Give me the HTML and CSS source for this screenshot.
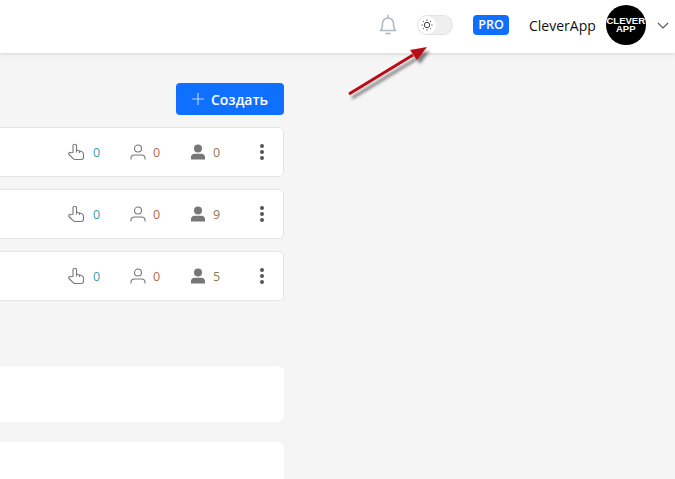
FILE: index.html
```html
<!DOCTYPE html>
<html lang="ru">
<head>
<meta charset="utf-8">
<title>CleverApp</title>
<link rel="stylesheet" href="styles.css">
</head>
<body>
<header class="topbar">
  <svg class="bell" width="20" height="22" viewBox="0 0 20 22" fill="none" stroke="#aebbc1" stroke-width="1.600"><path d="M2.500 16.500c1.300-1.400 2-2.600 2-5.500V9.500c0-3 2.300-5.500 5.500-5.500s5.500 2.500 5.500 5.500V11c0 2.900.7 4.100 2 5.500z" stroke-linejoin="round"/><path d="M10 1.500V4M8 19.500h4" stroke-linecap="round"/></svg>
  <div class="toggle">
    <span class="knob">
      <svg width="12" height="12" viewBox="0 0 12 12" fill="none" stroke="#444" stroke-width="1"><circle cx="6" cy="6" r="2.700"/><path d="M6 .5v1.200M6 10.300v1.200M.5 6h1.200M10.300 6h1.200M2.100 2.100l.9.9M9 9l.9.9M2.100 9.900l.9-.9M9 3l.9-.9"/></svg>
    </span>
  </div>
  <span class="pro">PRO</span>
  <span class="username">CleverApp</span>
  <span class="avatar"><span>CLEVER</span><span>APP</span></span>
  <svg class="chevron" width="12" height="7" viewBox="0 0 12 7" fill="none" stroke="#555" stroke-width="1.100"><path d="M1 1l5 5 5-5"/></svg>
</header>

<main class="content">
  <div class="toolbar">
    <button class="create"><svg class="plus" width="12" height="12" viewBox="0 0 12 12" stroke="#b9d4ff" stroke-width="1.200"><path d="M6 0v12M0 6h12"/></svg>Создать</button>
  </div>

  <div class="list">
    <div class="row">
      <span class="stat stat-click"><svg class="ic" width="17" height="18" viewBox="0 0 17 18" fill="none" stroke="#777" stroke-width="1.100" stroke-linejoin="round"><path d="M5 9.500V2.500c0-1.600 3.500-1.600 3.500 0V7l5 1.500c1.500.5 2 1.200 2 2.500v3c0 1.500-.8 2.500-2 2.500H7c-.8 0-1.300-.3-1.800-.8L1 11.500C0 10.300 1.600 8.800 2.800 9.800zM8.500 7v2.500M11.500 8v2"/></svg><span class="num teal">0</span></span>
      <span class="stat stat-reach"><svg class="ic" width="16" height="16" viewBox="0 0 16 16" fill="none" stroke="#777" stroke-width="1.100"><circle cx="8" cy="4.500" r="3.500"/><path d="M1 15.500v-1.300c0-2 1.500-3.200 3.500-3.200h7c2 0 3.500 1.200 3.500 3.200v1.300"/></svg><span class="num rust">0</span></span>
      <span class="stat stat-sub"><svg class="ic" width="16" height="16" viewBox="0 0 16 16" fill="#777"><circle cx="8" cy="4.500" r="4"/><path d="M1 15.500v-2.500c0-2 1.500-3.300 3.500-3.300h7c2 0 3.500 1.300 3.500 3.300v2.500z"/></svg><span class="num olive">0</span></span>
      <span class="dots"><i></i><i></i><i></i></span>
    </div>
    <div class="row">
      <span class="stat stat-click"><svg class="ic" width="17" height="18" viewBox="0 0 17 18" fill="none" stroke="#777" stroke-width="1.100" stroke-linejoin="round"><path d="M5 9.500V2.500c0-1.600 3.500-1.600 3.500 0V7l5 1.500c1.500.5 2 1.200 2 2.500v3c0 1.500-.8 2.500-2 2.500H7c-.8 0-1.300-.3-1.800-.8L1 11.500C0 10.300 1.600 8.800 2.800 9.800zM8.500 7v2.500M11.500 8v2"/></svg><span class="num teal">0</span></span>
      <span class="stat stat-reach"><svg class="ic" width="16" height="16" viewBox="0 0 16 16" fill="none" stroke="#777" stroke-width="1.100"><circle cx="8" cy="4.500" r="3.500"/><path d="M1 15.500v-1.300c0-2 1.500-3.200 3.500-3.200h7c2 0 3.500 1.200 3.500 3.200v1.300"/></svg><span class="num rust">0</span></span>
      <span class="stat stat-sub"><svg class="ic" width="16" height="16" viewBox="0 0 16 16" fill="#777"><circle cx="8" cy="4.500" r="4"/><path d="M1 15.500v-2.500c0-2 1.500-3.300 3.500-3.300h7c2 0 3.500 1.300 3.500 3.300v2.500z"/></svg><span class="num olive">9</span></span>
      <span class="dots"><i></i><i></i><i></i></span>
    </div>
    <div class="row">
      <span class="stat stat-click"><svg class="ic" width="17" height="18" viewBox="0 0 17 18" fill="none" stroke="#777" stroke-width="1.100" stroke-linejoin="round"><path d="M5 9.500V2.500c0-1.600 3.500-1.600 3.500 0V7l5 1.500c1.500.5 2 1.200 2 2.500v3c0 1.500-.8 2.500-2 2.500H7c-.8 0-1.300-.3-1.800-.8L1 11.500C0 10.300 1.600 8.800 2.800 9.800zM8.500 7v2.500M11.500 8v2"/></svg><span class="num teal">0</span></span>
      <span class="stat stat-reach"><svg class="ic" width="16" height="16" viewBox="0 0 16 16" fill="none" stroke="#777" stroke-width="1.100"><circle cx="8" cy="4.500" r="3.500"/><path d="M1 15.500v-1.300c0-2 1.500-3.200 3.500-3.200h7c2 0 3.500 1.200 3.500 3.200v1.300"/></svg><span class="num rust">0</span></span>
      <span class="stat stat-sub"><svg class="ic" width="16" height="16" viewBox="0 0 16 16" fill="#777"><circle cx="8" cy="4.500" r="4"/><path d="M1 15.500v-2.500c0-2 1.500-3.300 3.500-3.300h7c2 0 3.500 1.300 3.500 3.300v2.500z"/></svg><span class="num olive">5</span></span>
      <span class="dots"><i></i><i></i><i></i></span>
    </div>
  </div>

  <div class="blank blank-first"></div>
  <div class="blank blank-second"></div>
</main>

<svg class="arrow" width="100" height="70" viewBox="0 0 100 70" fill="none">
  <defs><filter id="soft" x="-20%" y="-20%" width="140%" height="140%"><feGaussianBlur stdDeviation="1.500"/></filter></defs>
  <g filter="url(#soft)" opacity=".6" transform="translate(3 4)">
    <path d="M8 54L72 15" stroke="#333" stroke-width="3"/>
    <path d="M86 7L69 10L76 20z" fill="#333"/>
  </g>
  <path d="M8 54L72 15" stroke="#b80d14" stroke-width="3"/>
  <path d="M86 7L69 10L76 20z" fill="#b80d14"/>
</svg>
</body>
</html>
```

FILE: styles.css
```css
* { box-sizing: border-box; }

html, body {
  margin: 0;
  height: 100%;
  overflow: hidden;
}

body {
  position: relative;
  background: #f5f5f5;
  font-family: "Open Sans", "Noto Sans", sans-serif;
  color: #222;
}

.topbar {
  height: 53px;
  background: #fff;
  box-shadow: 0 1px 4px rgba(0, 0, 0, .14);
  display: flex;
  align-items: center;
  padding: 0 6px 3px 378px;
}

.bell { flex: none; }

.toggle {
  width: 36px;
  height: 20px;
  margin-left: 19px;
  border-radius: 10px;
  background: #efefef;
  border: 1px solid #e2e2e2;
  flex: none;
}

.knob {
  width: 18px;
  height: 18px;
  border-radius: 50%;
  background: #fff;
  display: flex;
  align-items: center;
  justify-content: center;
}

.pro {
  margin-left: 20px;
  width: 36px;
  height: 20px;
  border-radius: 4px;
  background: #0f6fff;
  color: #fff;
  font-size: 12.500px;
  font-weight: 600;
  line-height: 20px;
  text-align: center;
  flex: none;
}

.username {
  margin-left: 20px;
  font-size: 14px;
  color: #111;
  flex: none;
}

.avatar {
  margin-left: 10px;
  width: 40px;
  height: 40px;
  border-radius: 50%;
  background: #000;
  color: #fff;
  font-family: "Liberation Sans", sans-serif;
  font-size: 9.500px;
  font-weight: 700;
  line-height: 8px;
  display: flex;
  flex-direction: column;
  align-items: center;
  justify-content: center;
  flex: none;
}

.chevron {
  margin-left: 11px;
  flex: none;
}

.content {
  width: 284px;
  padding-top: 30px;
}

.toolbar {
  display: flex;
  justify-content: flex-end;
}

.create {
  width: 108px;
  height: 32px;
  border: 0;
  border-radius: 4px;
  background: #0f6fff;
  color: #fff;
  font-family: inherit;
  font-size: 14px;
  font-weight: 600;
  display: flex;
  align-items: center;
  justify-content: center;
  padding: 0;
}

.plus {
  margin-right: 7px;
  flex: none;
}

.list {
  margin-top: 12px;
  display: flex;
  flex-direction: column;
  gap: 12px;
}

.row {
  height: 50px;
  background: #fff;
  border: 1px solid #e4e4e4;
  border-left: 0;
  border-radius: 0 5px 5px 0;
  display: flex;
  align-items: center;
  justify-content: flex-end;
  padding-right: 19px;
}

.stat {
  display: flex;
  align-items: center;
  font-size: 12.500px;
}

.stat-click { width: 62px; }
.stat-reach { width: 60px; }
.stat-sub { width: 70px; }

.ic { flex: none; }
.stat-click .num { margin-left: 8px; }
.stat-reach .num { margin-left: 7px; }
.stat-sub .num { margin-left: 7px; }

.teal { color: #3f9ea6; }
.rust { color: #b4694f; }
.olive { color: #8a7a52; }

.dots {
  width: 4px;
  display: flex;
  flex-direction: column;
  gap: 2px;
}

.dots i {
  width: 4px;
  height: 4px;
  border-radius: 50%;
  background: #555;
}

.blank {
  background: #fff;
  border-radius: 0 6px 6px 0;
}

.blank-first {
  margin-top: 65px;
  height: 56px;
}

.blank-second {
  margin-top: 20px;
  height: 60px;
}

.arrow {
  position: absolute;
  left: 341px;
  top: 40px;
}
```
